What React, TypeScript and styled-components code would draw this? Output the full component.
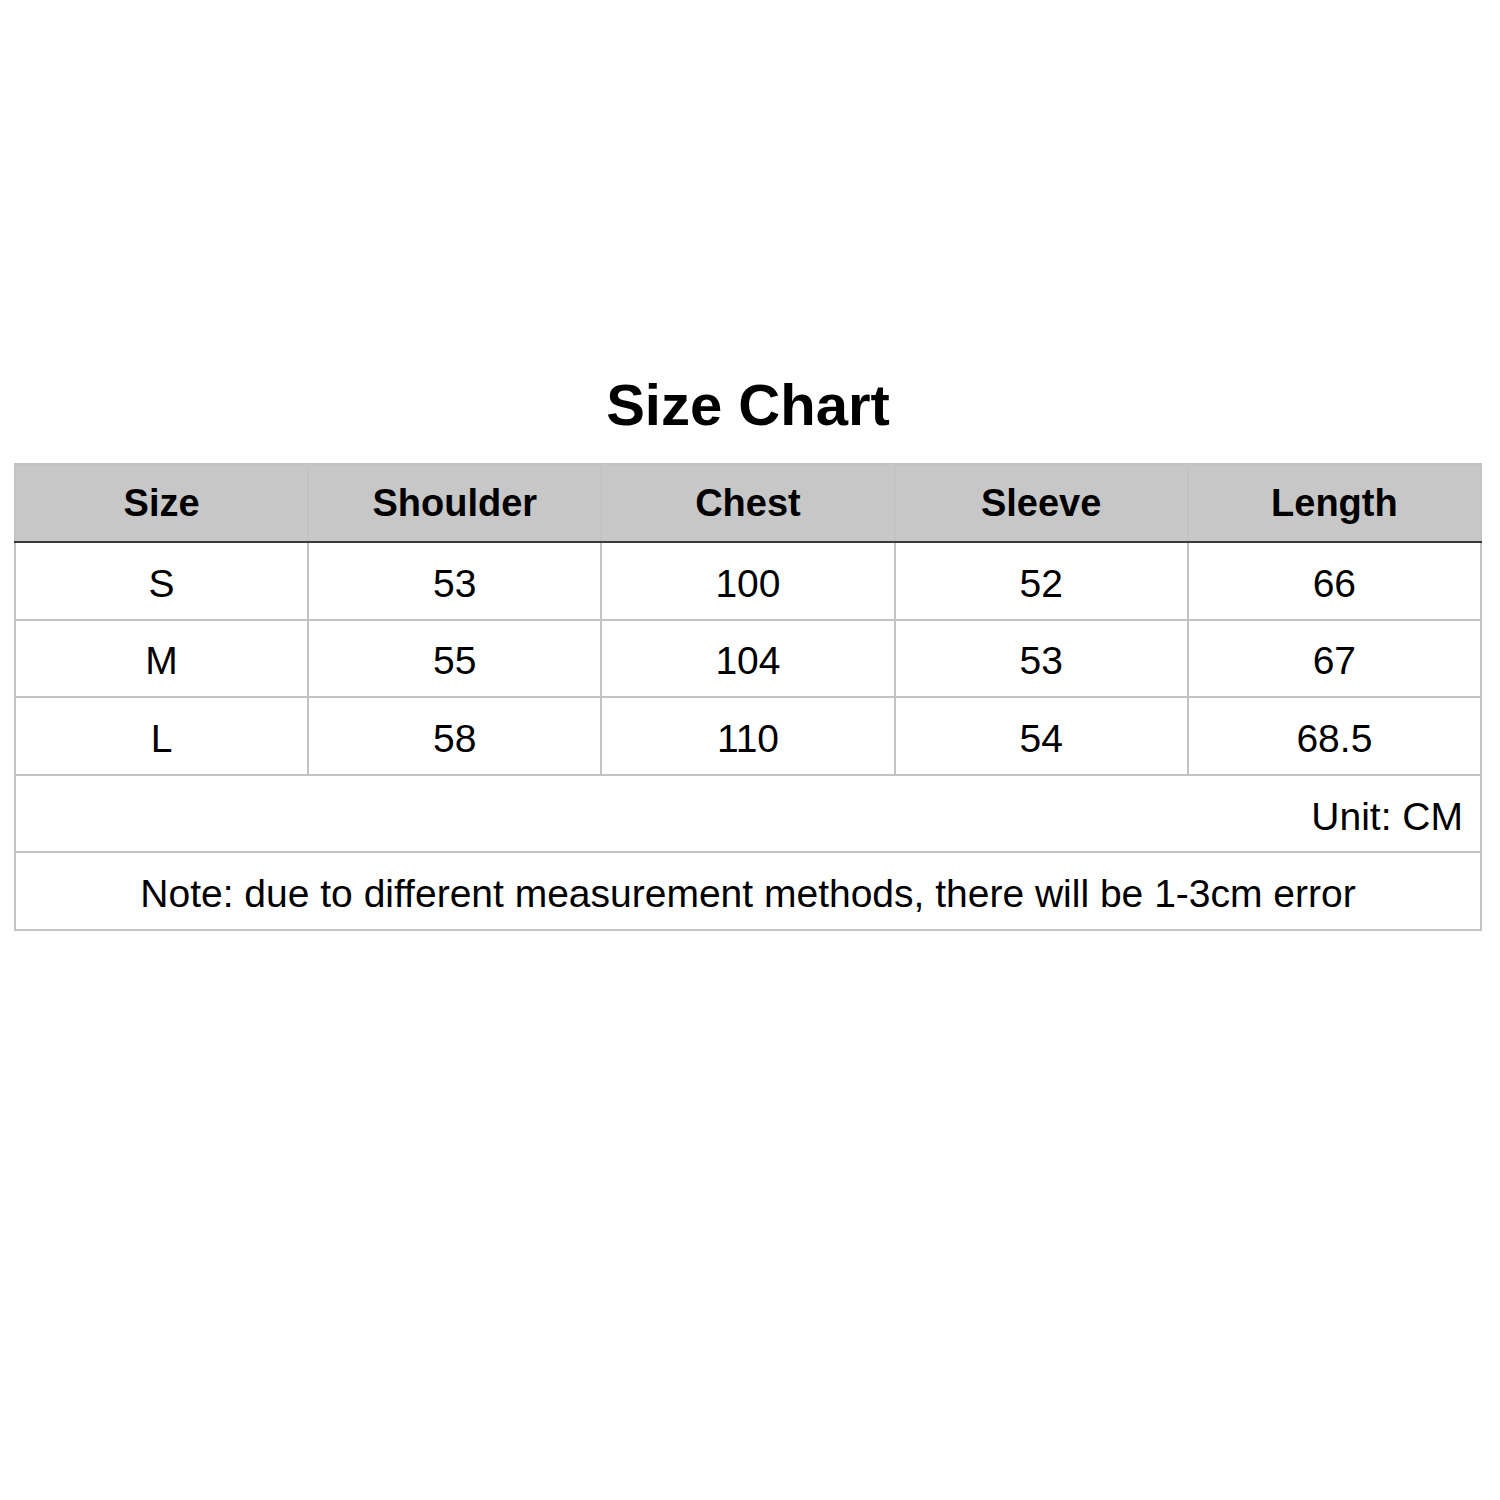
import React from "react";
import styled, { createGlobalStyle } from "styled-components";

const Global = createGlobalStyle`
  html, body { margin: 0; padding: 0; background: #fff; }
  body { font-family: "Liberation Sans", Arial, sans-serif; color: #000; }
`;

const Page = styled.div`
  width: 1500px;
  height: 1500px;
  padding-top: 371px;
  box-sizing: border-box;
  display: flex;
  flex-direction: column;
  align-items: flex-start;
`;

const Title = styled.h1`
  margin: 0 0 25px;
  font-size: 58px;
  line-height: 67px;
  font-weight: 700;
  text-align: center;
  width: 1496px;
`;

const Table = styled.table`
  border-collapse: collapse;
  width: 1468px;
  margin-left: 14px;
  table-layout: fixed;
`;

const HeadCell = styled.th`
  background: #c6c7c6;
  border: 2px solid #c2c2c2;
  border-bottom: 2px solid #3a3a3a;
  height: 76px;
  padding: 0;
  font-size: 38px;
  font-weight: 700;
  text-align: center;
  vertical-align: middle;
`;

const Cell = styled.td<{ $align?: string }>`
  border: 2px solid #c2c2c2;
  height: 77.6px;
  box-sizing: border-box;
  padding: 6px ${(p) => (p.$align === "right" ? "17px" : "0")} 0 0;
  font-size: 39px;
  text-align: ${(p) => p.$align || "center"};
  vertical-align: middle;
`;

const headers = ["Size", "Shoulder", "Chest", "Sleeve", "Length"];
const rows = [
  ["S", "53", "100", "52", "66"],
  ["M", "55", "104", "53", "67"],
  ["L", "58", "110", "54", "68.5"],
];

export default function App() {
  return (
    <>
      <Global />
      <Page>
        <Title>Size Chart</Title>
        <Table>
          <thead>
            <tr>
              {headers.map((h) => (
                <HeadCell key={h}>{h}</HeadCell>
              ))}
            </tr>
          </thead>
          <tbody>
            {rows.map((r) => (
              <tr key={r[0]}>
                {r.map((c, i) => (
                  <Cell key={i}>{c}</Cell>
                ))}
              </tr>
            ))}
            <tr>
              <Cell colSpan={5} $align="right">Unit: CM</Cell>
            </tr>
            <tr>
              <Cell colSpan={5}>
                Note: due to different measurement methods, there will be 1-3cm error
              </Cell>
            </tr>
          </tbody>
        </Table>
      </Page>
    </>
  );
}
